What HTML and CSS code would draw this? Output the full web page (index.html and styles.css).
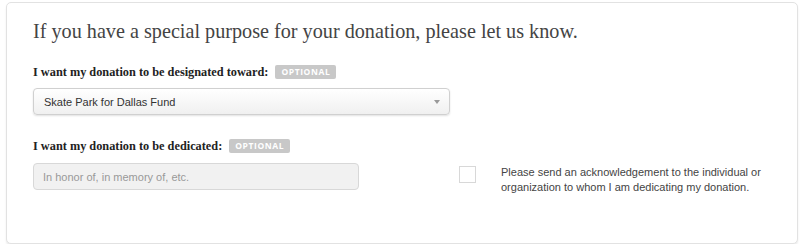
FILE: index.html
```html
<!DOCTYPE html>
<html>
<head>
<meta charset="utf-8">
<link rel="stylesheet" href="styles.css">
</head>
<body>
<div class="card">
  <h2 class="title">If you have a special purpose for your donation, please let us know.</h2>
  <div class="field first">
    <div class="label">I want my donation to be designated toward: <span class="badge">OPTIONAL</span></div>
    <div class="select"><span>Skate Park for Dallas Fund</span><span class="arrow"></span></div>
  </div>
  <div class="field second">
    <div class="label">I want my donation to be dedicated: <span class="badge">OPTIONAL</span></div>
    <div class="row">
      <div class="input">In honor of, in memory of, etc.</div>
      <div class="check"></div>
      <div class="note">Please send an acknowledgement to the individual or<br>organization to whom I am dedicating my donation.</div>
    </div>
  </div>
</div>
</body>
</html>
```
FILE: styles.css
```css
html, body { margin: 0; padding: 0; background: #fff; }
body { padding: 2px 2px 0 6px; }
.card {
  box-sizing: border-box;
  height: 242px;
  border: 1px solid #e2e2e2;
  border-radius: 5px;
  box-shadow: 0 2px 2px rgba(0,0,0,0.08);
  padding: 16px 26px 0 26px;
  background: #fff;
}
.title {
  margin: 0;
  font-family: "Liberation Serif", serif;
  font-weight: normal;
  font-size: 20.2px;
  color: #444;
  line-height: 24px;
}
.field.first { margin-top: 21px; }
.field.second { margin-top: 23px; }
.label {
  font-family: "Liberation Serif", serif;
  font-weight: bold;
  font-size: 12.3px;
  color: #222;
  line-height: 16px;
  display: flex;
  align-items: center;
  gap: 7px;
}
.badge {
  display: inline-block;
  background: #c8c8c8;
  color: #fff;
  font-family: "Open Sans", sans-serif;
  font-weight: bold;
  font-size: 8.5px;
  letter-spacing: 0.6px;
  border-radius: 2px;
  padding: 0 6px;
  line-height: 14px;
}
.select {
  margin-top: 8px;
  width: 417px;
  height: 27px;
  box-sizing: border-box;
  border: 1px solid #d0d0d0;
  border-radius: 4px;
  background: linear-gradient(#fff, #f0f0f0);
  box-shadow: 0 1px 2px rgba(0,0,0,0.12);
  display: flex;
  align-items: center;
  justify-content: space-between;
  padding: 0 9px 0 10px;
  font-family: "Liberation Sans", Arial, sans-serif;
  font-size: 11px;
  color: #333;
}
.arrow {
  width: 0; height: 0;
  border-left: 3.5px solid transparent;
  border-right: 3.5px solid transparent;
  border-top: 4px solid #999;
}
.row {
  margin-top: 9px;
  display: flex;
  align-items: flex-start;
}
.input {
  width: 326px;
  height: 27px;
  box-sizing: border-box;
  border: 1px solid #d8d8d8;
  border-radius: 4px;
  background: #f1f1f1;
  padding: 0 9px;
  display: flex;
  align-items: center;
  font-family: "Liberation Sans", Arial, sans-serif;
  font-size: 11px;
  color: #999;
}
.check {
  margin-left: 100px;
  margin-top: 3px;
  width: 17px;
  height: 17px;
  box-sizing: border-box;
  border: 1px solid #d8d8d8;
  background: #fff;
}
.note {
  margin-left: 25px;
  margin-top: 2px;
  font-family: "Liberation Sans", Arial, sans-serif;
  font-size: 11px;
  line-height: 15px;
  color: #444;
}
```
